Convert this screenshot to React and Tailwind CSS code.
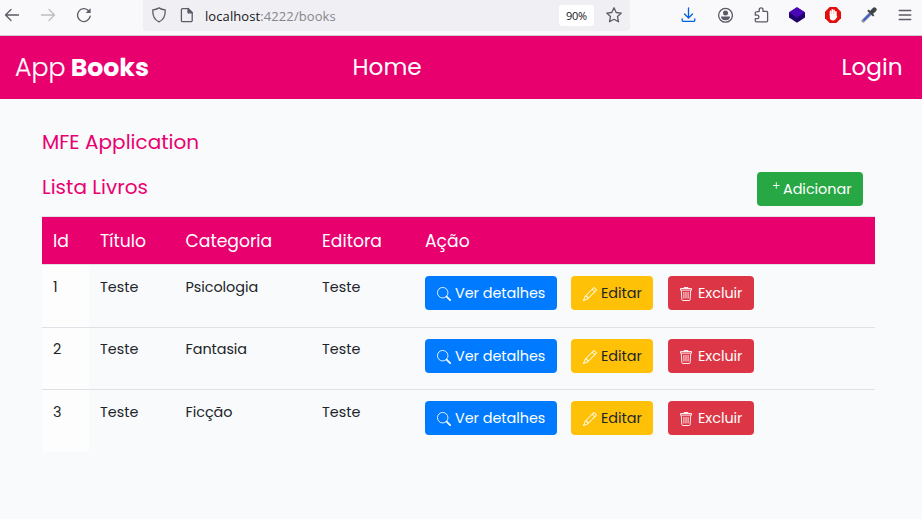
import React from "react";

const books = [
  { id: 1, titulo: "Teste", categoria: "Psicologia", editora: "Teste", row: "h-[63px] pt-[11px]", line: "leading-[22px]" },
  { id: 2, titulo: "Teste", categoria: "Fantasia", editora: "Teste", row: "h-[62px] pt-[11px]", line: "leading-[20px]" },
  { id: 3, titulo: "Teste", categoria: "Ficção", editora: "Teste", row: "h-[63px] pt-[11px]", line: "leading-[22px]" },
];

function Icon({ children, className = "", box = "0 0 16 16" }) {
  return (
    <svg viewBox={box} className={`mb-px h-4 w-4 shrink-0 ${className}`} fill="none" stroke="currentColor" strokeWidth="1.3" strokeLinejoin="round" strokeLinecap="round">
      {children}
    </svg>
  );
}

function SearchIcon() {
  return (
    <svg viewBox="0 0 16 16" className="mt-[2px] h-[14px] w-[14px] shrink-0" fill="none" stroke="currentColor">
      <circle cx="6.500" cy="6.500" r="6" />
      <path d="m11 11 4 4" strokeWidth="2" strokeLinecap="round" />
    </svg>
  );
}

function PencilIcon() {
  return (
    <svg viewBox="0 0 16 16" className="mt-[2px] h-[14px] w-[14px] shrink-0 text-white" fill="currentColor">
      <path d="M12.146.146a.5.5 0 0 1 .708 0l3 3a.5.5 0 0 1 0 .708l-10 10a.5.5 0 0 1-.168.11l-5 2a.5.5 0 0 1-.65-.65l2-5a.5.5 0 0 1 .11-.168l10-10zM11.207 2.5 13.5 4.793 14.793 3.5 12.5 1.207 11.207 2.5zm1.586 3L10.5 3.207 4 9.707V10h.5a.5.5 0 0 1 .5.5v.5h.5a.5.5 0 0 1 .5.5v.5h.293l6.5-6.5zm-9.761 5.175-.106.106-1.528 3.821 3.821-1.528.106-.106A.5.5 0 0 1 5 12.5V12h-.5a.5.5 0 0 1-.5-.5V11h-.5a.5.5 0 0 1-.468-.325z" />
    </svg>
  );
}

function TrashIcon() {
  return (
    <svg viewBox="0 0 14 14" className="mt-[2px] -ml-[1px] mr-[1px] h-[14px] w-[14px] shrink-0" fill="none" stroke="currentColor" strokeWidth="0.9" strokeLinejoin="round">
      <path d="M1.500 1.500h11v1.600h-11ZM5 1.300V.5h4v.8M2.300 3.200l.5 9.300a1 1 0 0 0 1 1h6.400a1 1 0 0 0 1-1l.5-9.300" />
      <path d="M4.900 4.900v6.600M7 4.900v6.600M9.100 4.900v6.600" />
    </svg>
  );
}

function Toolbar() {
  return (
    <div className="flex h-9 items-start border-b border-[#ccccd1] bg-[#f9f9fb] text-[#5b5b66]">
      <div className="flex h-[31px] w-[143px] items-center pl-1">
        <Icon className="mr-5"><path d="M14.5 8H1.5M7 2.5 1.5 8 7 13.5" /></Icon>
        <Icon className="mr-5 text-[#bdbdc2]"><path d="M1.5 8h13M9 2.5 14.5 8 9 13.5" /></Icon>
        <Icon>
          <path d="M14.2 9.2a6.4 6.4 0 1 1-1.4-5.2" />
          <path d="M14.6 1.2v4.9H9.7Z" fill="currentColor" stroke="none" />
        </Icon>
      </div>
      <div className="flex h-[31px] w-[487px] items-center rounded-b bg-[#f0f0f4] pl-2">
        <Icon><path d="M8 .9c2 1.3 4 1.800 6.200 2 .3 5-1.200 9.700-6.200 12C3 12.600 1.500 7.900 1.800 2.900 4 2.700 6 2.200 8 .9Z" /></Icon>
        <Icon className="ml-3"><path d="M3.600 1.600h5.600l4 4v7.800a1.200 1.200 0 0 1-1.200 1.200H3.600a1.200 1.200 0 0 1-1.200-1.200V2.800a1.200 1.200 0 0 1 1.200-1.200Z" /><path d="M9 1.500v4.300h4.300Z" fill="currentColor" /></Icon>
        <span className="ml-[10px] whitespace-nowrap pt-[2px] font-['Open_Sans',sans-serif] text-[13px] tracking-[0.09px] text-[#85858d]">
          <span className="text-[#15141a]">localhost</span>:4222/books
        </span>
        <span className="mr-[12px] ml-auto flex h-[21px] w-[35px] items-center justify-center rounded-[3px] bg-white pt-px font-['Open_Sans',sans-serif] text-[11px] tracking-[-0.3px] text-[#15141a]">90%</span>
        <Icon className="mr-2"><path d="m8 .8 2.200 4.700 5.100.6-3.800 3.500 1 5.200L8 12.300l-4.500 2.500 1-5.200L.7 6.100l5.100-.6Z" /></Icon>
      </div>
      <div className="flex h-[31px] flex-1 items-center justify-end gap-5 pr-[9px]">
        <Icon className="text-[#0061e0]"><path d="M7.500 .8v10M3.500 7l4 4 4-4M1.200 11.800v1.400a1.200 1.200 0 0 0 1.200 1.200h10.200a1.200 1.200 0 0 0 1.200-1.200v-1.400" /></Icon>
        <Icon><circle cx="8.500" cy="8.300" r="6.900" /><circle cx="8.500" cy="6.100" r="2.500" fill="currentColor" stroke="none" /><path d="M4 9.500h9a4.500 3.700 0 0 1-9 0Z" fill="currentColor" stroke="none" /></Icon>
        <Icon><path d="M6.200 4.400V2.800a1.900 1.900 0 0 1 3.800 0v1.600h3.600a1 1 0 0 1 1 1v8.400a1 1 0 0 1-1 1H3.300a1 1 0 0 1-1-1v-2.200h1.900a1.700 1.700 0 0 0 0-3.400H2.300v-2.400a1 1 0 0 1 1-1Z" /></Icon>
        <Icon><path d="M0 5.500 8 .8l8 4.700v5L8 15.700 0 10.500Z" fill="#20006b" stroke="none" /><path d="M8 0l8 5.200-8 5.600-8-5.600Z" fill="#4906b4" stroke="none" /></Icon>
        <Icon><path d="M4.700 0h6.600L16 4.700v6.600L11.300 16H4.700L0 11.300V4.700Z" fill="#e40d0d" stroke="none" /><path d="M5.500 8V4.200M7.300 7V2.900M9.100 7V3.300M10.900 9V4.800" stroke="white" strokeWidth="1.600" /><path d="M4.800 7v3.500c0 2.200 1.300 3 3.200 3 2 0 3.500-1.500 4.300-4.200l-1.500-.7V7Z" fill="white" stroke="none" /></Icon>
        <Icon><path d="m2.200 13.900 6.600-6.600" stroke="#8b93a0" strokeWidth="3.400" /><path d="m3 13 5.400-5.400" stroke="#3156da" strokeWidth="1.600" /><path d="m7.500 3.700 4.700 4.700M10 6l3.500-3.500" stroke="#414345" strokeWidth="2" /><path d="m11.200 4.800 2.200-2.200" stroke="#414345" strokeWidth="4.400" /></Icon>
        <Icon><path d="M2.200 3.500h11.600M2.200 8h11.600M2.200 12.500h11.600" /></Icon>
      </div>
    </div>
  );
}

const button = "flex h-[34px] items-center whitespace-nowrap rounded-[4px] pl-3 text-[14.4px] tracking-[-0.03px]";

export default function App() {
  return (
    <div className="h-[519px] w-[922px] overflow-hidden bg-[#f9fafc] font-[Poppins,Inter,sans-serif] text-[#212529]">
      <Toolbar />
      <nav className="flex h-[63px] items-center bg-[#e9006f] text-[23.2px] leading-9 text-white">
        <div className="w-[352px] whitespace-nowrap pl-[15px] text-[25.2px]">
          <span className="font-light [-webkit-text-stroke:0.2px_white]">App</span> <span className="-ml-[1.500px] font-bold">Books</span>
        </div>
        <a className="w-[489.500px] pb-[2px] pl-[0.500px]">Home</a>
        <a className="pb-[2px]">Login</a>
      </nav>
      <main className="pl-[42px] text-[14.4px]">
        <h1 className="pt-[28px] text-[20px] leading-[30px] tracking-[0.03px] text-[#e9006f]">MFE Application</h1>
        <div className="mt-[15px] flex h-[44px] w-[821px] justify-between">
          <h2 className="text-[20px] leading-[30px] tracking-[0.03px] text-[#e9006f]">Lista Livros</h2>
          <button className={`${button} w-[106px] bg-[#28a745] text-white`}>
            <svg viewBox="0 0 14 14" className="h-[14px] w-[14px] shrink-0" stroke="currentColor" strokeWidth="0.9"><path d="M7.300 .2v6.600M4 3.500h6.600" /></svg>
            <span className="pt-px">Adicionar</span>
          </button>
        </div>
        <div className="w-[833px]">
          <div className="grid h-[48px] grid-cols-[47px_85.500px_136.500px_103px_461px] items-center border-t border-[#dee2e6] bg-[#e9006f] text-[17.200px] text-white">
            <span className="pl-[11px] pt-[3px]">Id</span>
            <span className="pl-[11px] pt-[3px]">Título</span>
            <span className="pl-[11px] pt-[3px]">Categoria</span>
            <span className="pl-[11px] pt-[3px]">Editora</span>
            <span className="pl-[11px] pt-[3px]">Ação</span>
          </div>
          {books.map((book) => (
            <div key={book.id} className={`grid grid-cols-[47px_85.500px_136.500px_103px_461px] border-t border-[#dee2e6] ${book.line} ${book.row}`}>
              <span className="-mt-[11px] bg-[#fdfdfe] pt-[11px] pl-[11px]">{book.id}</span>
              <span className="pl-[11px]">{book.titulo}</span>
              <span className="pl-[11px] tracking-[-0.05px]">{book.categoria}</span>
              <span className="pl-[11px]">{book.editora}</span>
              <div className="flex items-start pl-[11px]">
                <button className={`${button} w-[132px] gap-1 bg-[#007bff] text-white`}><SearchIcon /><span>Ver detalhes</span></button>
                <button className={`${button} ml-[14px] w-[82px] gap-1 bg-[#ffc107]`}><PencilIcon /><span>Editar</span></button>
                <button className={`${button} ml-[15px] w-[86px] gap-1 bg-[#dc3545] text-white`}><TrashIcon /><span>Excluir</span></button>
              </div>
            </div>
          ))}
        </div>
      </main>
    </div>
  );
}
